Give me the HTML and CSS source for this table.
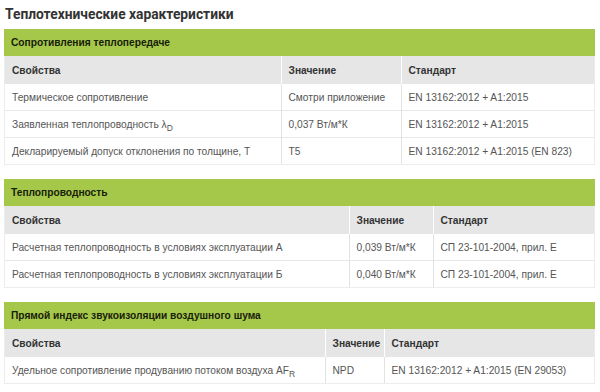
FILE: index.html
```html
<!DOCTYPE html>
<html lang="ru">
<head>
<meta charset="utf-8">
<link rel="stylesheet" href="styles.css">
</head>
<body>
<h1 class="title">Теплотехнические характеристики</h1>

<section class="block">
  <div class="band">Сопротивления теплопередаче</div>
  <table class="grid">
    <colgroup><col class="t1c1"><col class="t1c2"><col></colgroup>
    <thead><tr><th>Свойства</th><th>Значение</th><th>Стандарт</th></tr></thead>
    <tbody>
      <tr><td>Термическое сопротивление</td><td>Смотри приложение</td><td>EN 13162:2012 + A1:2015</td></tr>
      <tr><td>Заявленная теплопроводность λ<sub>D</sub></td><td>0,037 Вт/м*К</td><td>EN 13162:2012 + A1:2015</td></tr>
      <tr><td>Декларируемый допуск отклонения по толщине, Т</td><td>Т5</td><td>EN 13162:2012 + A1:2015 (EN 823)</td></tr>
    </tbody>
  </table>
</section>

<section class="block">
  <div class="band">Теплопроводность</div>
  <table class="grid">
    <colgroup><col class="t2c1"><col class="t2c2"><col></colgroup>
    <thead><tr><th>Свойства</th><th>Значение</th><th>Стандарт</th></tr></thead>
    <tbody>
      <tr><td>Расчетная теплопроводность в условиях эксплуатации А</td><td>0,039 Вт/м*К</td><td>СП 23-101-2004, прил. Е</td></tr>
      <tr><td>Расчетная теплопроводность в условиях эксплуатации Б</td><td>0,040 Вт/м*К</td><td>СП 23-101-2004, прил. Е</td></tr>
    </tbody>
  </table>
</section>

<section class="block">
  <div class="band">Прямой индекс звукоизоляции воздушного шума</div>
  <table class="grid">
    <colgroup><col class="t3c1"><col class="t3c2"><col></colgroup>
    <thead><tr><th>Свойства</th><th>Значение</th><th>Стандарт</th></tr></thead>
    <tbody>
      <tr><td>Удельное сопротивление продуванию потоком воздуха AF<sub>R</sub></td><td>NPD</td><td>EN 13162:2012 + A1:2015 (EN 29053)</td></tr>
    </tbody>
  </table>
</section>
</body>
</html>
```

FILE: styles.css
```css
html, body {
  margin: 0;
  padding: 0;
  background: #ffffff;
}

body {
  padding: 0 5px 0 4px;
  font-family: "Liberation Sans", Arial, sans-serif;
  color: #555555;
}

.title {
  margin: 0 0 5px 1px;
  padding-top: 4px;
  font-family: Roboto, "Liberation Sans", Arial, sans-serif;
  font-size: 13.8px;
  line-height: 20px;
  font-weight: bold;
  color: #333333;
}

.block {
  border: 1px solid #ececec;
  border-top: 0;
  margin-bottom: 14px;
}

.band {
  height: 27px;
  line-height: 27px;
  padding-left: 7px;
  background: #a6c84a;
  font-size: 10.2px;
  font-weight: bold;
  color: #17200a;
  margin: 0 -1px;
}

.grid {
  width: 100%;
  border-collapse: collapse;
  table-layout: fixed;
  font-size: 10.2px;
}

.grid th,
.grid td {
  text-align: left;
  padding: 0 7px;
  white-space: nowrap;
  overflow: hidden;
}

.grid th {
  height: 28px;
  background: #e6e6e6;
  font-weight: bold;
  color: #333333;
  border-left: 1px solid #ffffff;
}

.grid th:first-child {
  border-left: 0;
}

.grid td {
  height: 26px;
  border-top: 1px solid #e8e8e8;
  border-left: 1px solid #e2e2e2;
  color: #555555;
}

.grid td:first-child {
  border-left: 0;
}

.grid tbody tr:first-child td {
  border-top: 0;
}

.grid sub {
  font-size: 8.5px;
  vertical-align: -3px;
  line-height: 0;
}

.t1c1 { width: 276px; }
.t1c2 { width: 120px; }
.t2c1 { width: 344px; }
.t2c2 { width: 84px; }
.t3c1 { width: 320px; }
.t3c2 { width: 59px; }
```
